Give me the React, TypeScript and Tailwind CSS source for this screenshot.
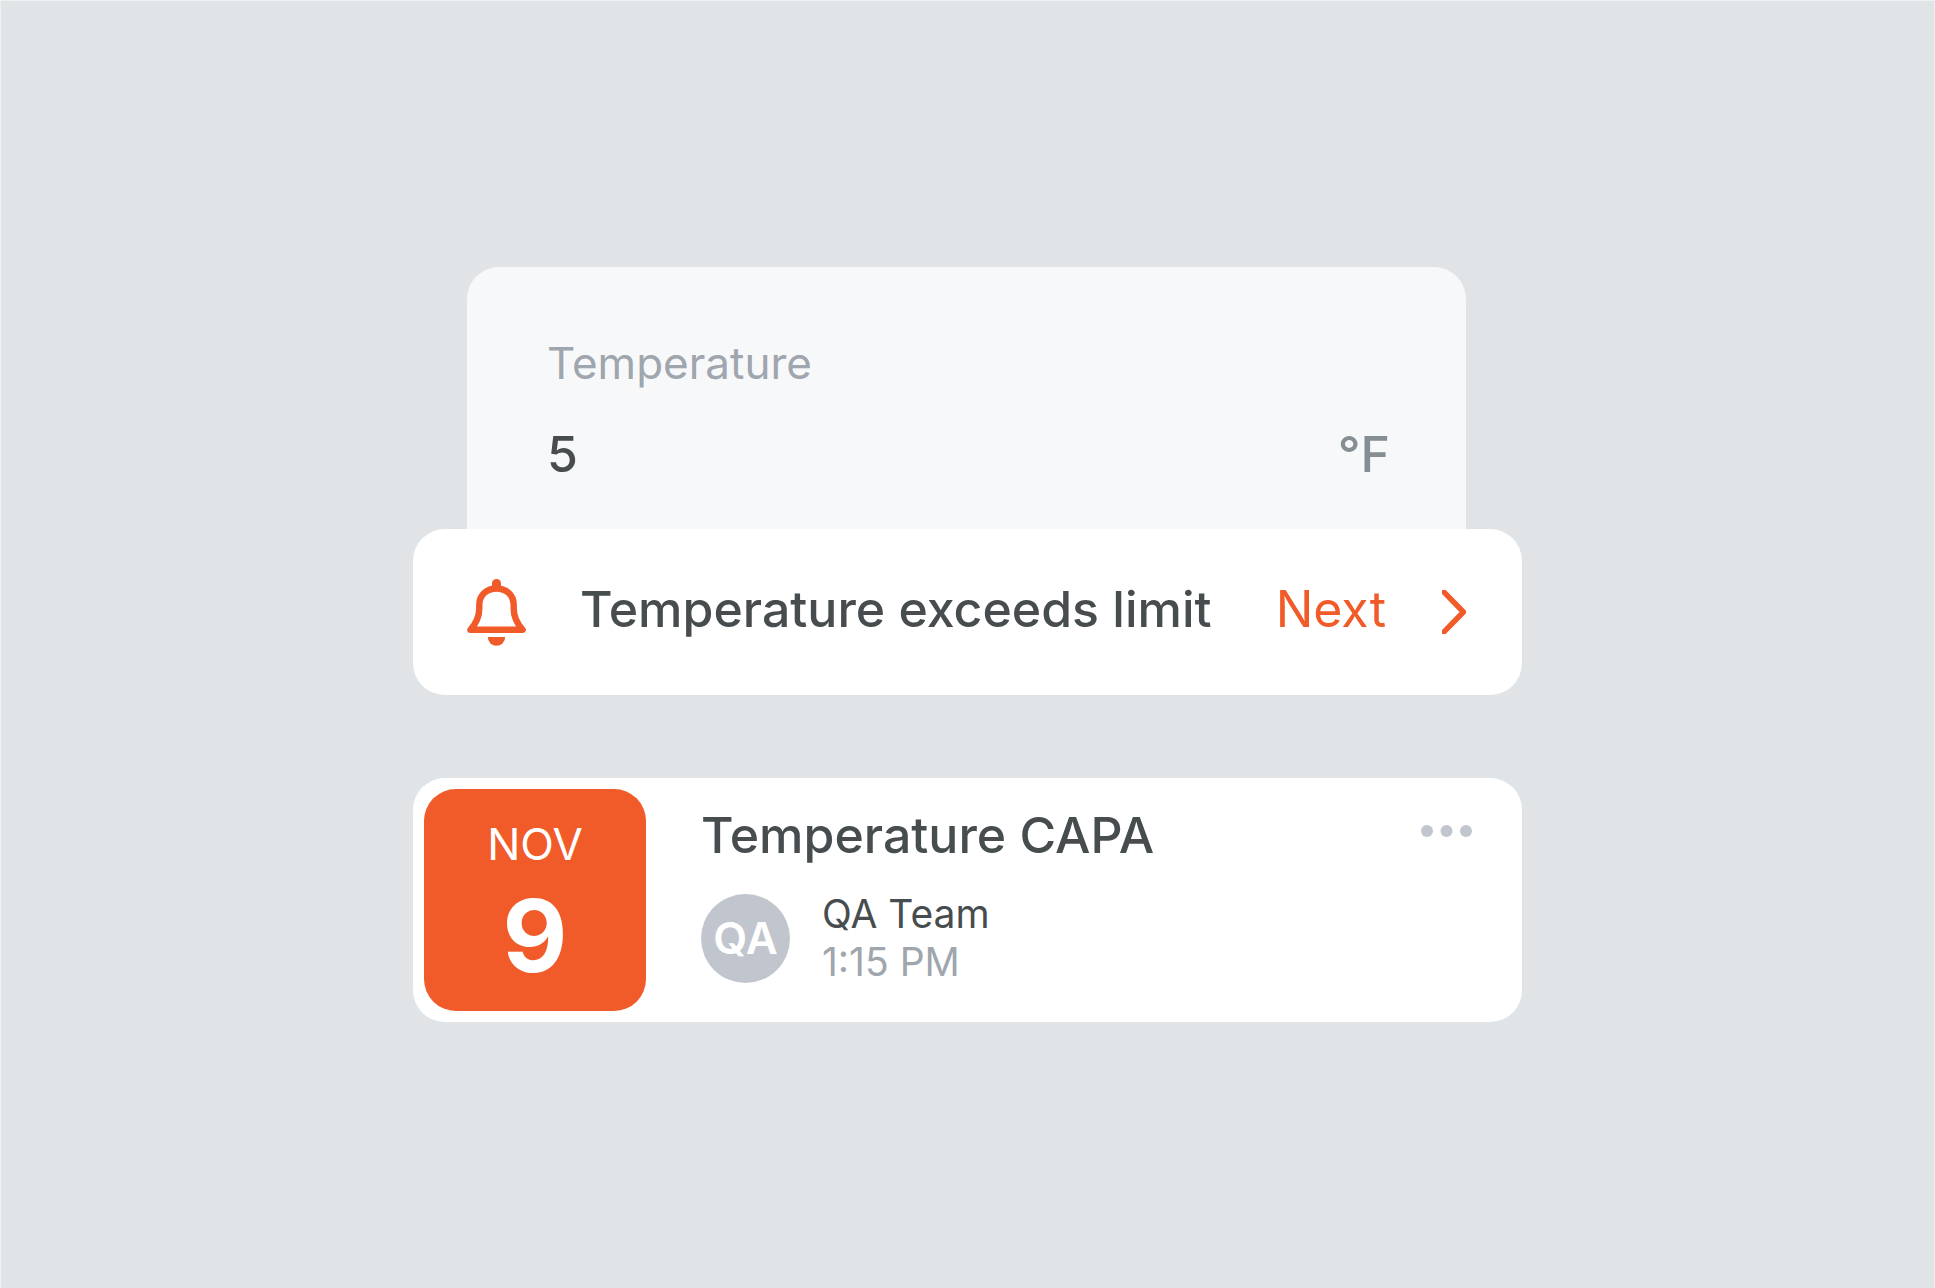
import { useState } from "react";

function BellIcon() {
  return (
    <svg width="59" height="67" viewBox="0 0 59 67" fill="none" className="shrink-0" aria-hidden="true">
      <path
        d="M3.4 50.8C9 44.5 12.3 37 12.3 29.5V25.5C12.3 16 20 9.5 29.5 9.5S46.7 16 46.7 25.5V29.5C46.7 37 50 44.5 55.6 50.8Z"
        stroke="currentColor"
        strokeWidth="6.4"
        strokeLinejoin="round"
      />
      <path d="M25 9V4.5a4.5 4.5 0 0 1 9 0V9Z" fill="currentColor" />
      <path d="M20.8 58h17.4a8.7 8.7 0 0 1-17.4 0Z" fill="currentColor" />
    </svg>
  );
}

function ChevronIcon() {
  return (
    <svg width="24" height="44" viewBox="0 0 24 44" fill="none" className="shrink-0" aria-hidden="true">
      <path
        d="M2 2.2L21.4 22L2 41.8"
        stroke="currentColor"
        strokeWidth="5.4"
        strokeLinecap="round"
        strokeLinejoin="round"
      />
    </svg>
  );
}

function DotsIcon() {
  return (
    <svg width="51" height="12" viewBox="0 0 51 12" fill="currentColor" aria-hidden="true">
      <circle cx="6" cy="6" r="6" />
      <circle cx="25.5" cy="6" r="6" />
      <circle cx="45" cy="6" r="6" />
    </svg>
  );
}

function TemperatureField() {
  const [value, setValue] = useState("5");

  return (
    <div className="mr-14 ml-[54px] rounded-t-[32px] bg-[#f7f8fa] pt-[68px] pr-[76px] pb-[43px] pl-20">
      <label htmlFor="temperature" className="block text-[44px] leading-14 text-[#9fa6ad]">
        Temperature
      </label>
      <div className="mt-[31px] flex h-16 items-center justify-between text-[50px] leading-16 font-medium">
        <input
          id="temperature"
          type="text"
          inputMode="numeric"
          value={value}
          onChange={(e) => setValue(e.target.value)}
          className="h-16 min-w-0 flex-1 bg-transparent text-[#474c4f] outline-none"
        />
        <span className="text-[#858e92]">°F</span>
      </div>
    </div>
  );
}

function LimitAlert() {
  return (
    <div
      role="alert"
      className="flex items-center rounded-[32px] bg-white py-12 pr-14 pl-[54px] text-[50px] leading-16"
    >
      <div className="flex h-[70px] flex-1 items-center gap-[54px]">
        <span className="text-[#f15a29]">
          <BellIcon />
        </span>
        <p className="pb-1.5 font-medium whitespace-nowrap text-[#474c4f]">Temperature exceeds limit</p>
      </div>
      <button type="button" className="flex items-center gap-14 text-[#f15a29]">
        <span className="pb-1.5">Next</span>
        <ChevronIcon />
      </button>
    </div>
  );
}

function TaskCard() {
  return (
    <article className="mt-[83px] flex rounded-[32px] bg-white p-[11px]">
      <time
        dateTime="11-09"
        className="flex size-[222px] shrink-0 flex-col items-center rounded-[32px] bg-[#f15a29] pt-[27px] text-white"
      >
        <span className="text-[44px] leading-14">NOV</span>
        <span className="mt-2 text-[100px] leading-28 font-bold">9</span>
      </time>
      <div className="ml-[55px] flex-1 pt-3.5">
        <h2 className="text-[50px] leading-16 font-medium text-[#474c4f]">Temperature CAPA</h2>
        <div className="mt-[23px] flex items-center gap-8">
          <span className="flex size-[89px] items-center justify-center rounded-full bg-[#c1c6ce] text-[44px] font-semibold text-white">
            QA
          </span>
          <div className="text-[39px] leading-12">
            <p className="text-[#474c4f]">QA Team</p>
            <p className="text-[#9fa6ad]">1:15 PM</p>
          </div>
        </div>
      </div>
      <button type="button" aria-label="More options" className="mt-9 mr-[39px] self-start text-[#c1c6ce]">
        <DotsIcon />
      </button>
    </article>
  );
}

export default function App() {
  return (
    <main className="flex min-h-screen items-center justify-center border-x border-t border-[#eef0f1] bg-[#e0e4e6] font-['Inter',sans-serif]">
      <div className="w-full max-w-[1109px]">
        <TemperatureField />
        <LimitAlert />
        <TaskCard />
      </div>
    </main>
  );
}
